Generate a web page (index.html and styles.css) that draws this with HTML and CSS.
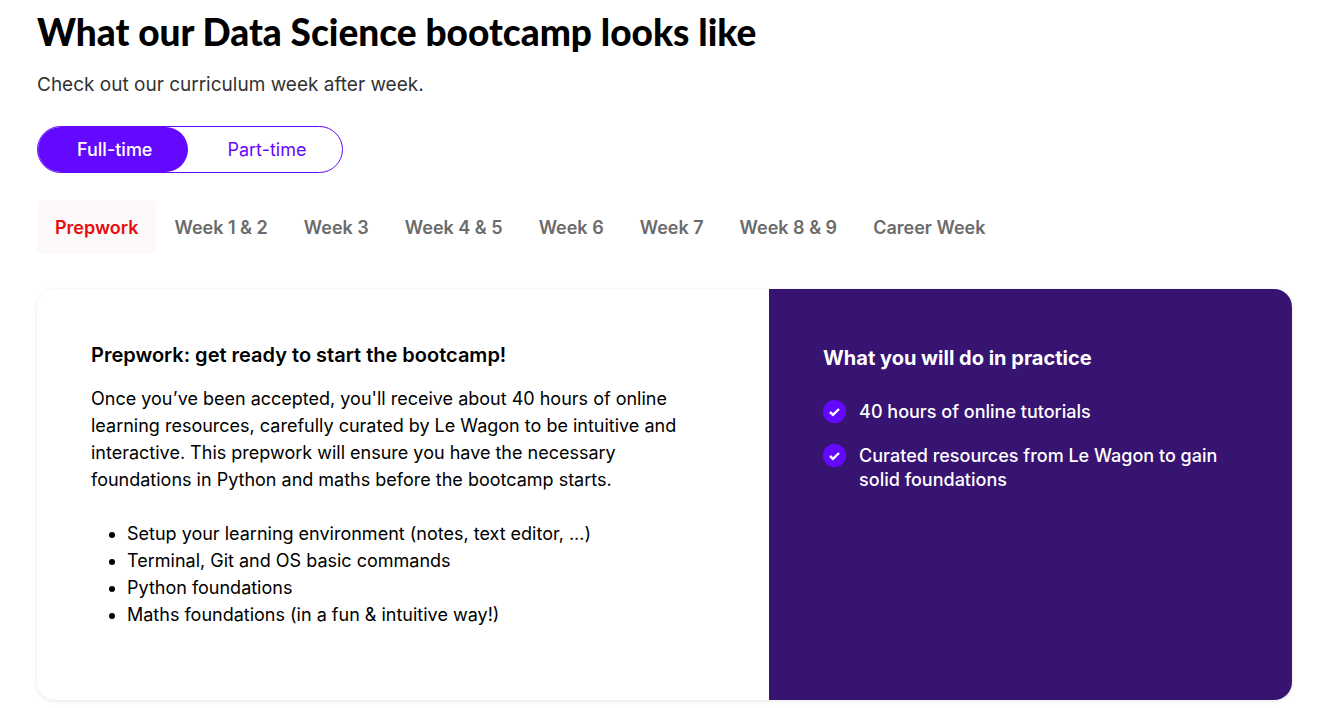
FILE: index.html
```html
<!DOCTYPE html>
<html lang="en">
<head>
<meta charset="utf-8">
<meta name="viewport" content="width=device-width, initial-scale=1">
<title>Data Science bootcamp curriculum</title>
<link rel="stylesheet" href="styles.css">
</head>
<body>
<main class="curriculum">
  <h1 class="title">What our Data Science bootcamp looks like</h1>
  <p class="subtitle">Check out our curriculum week after week.</p>
  <div class="toggle">
    <button type="button" class="toggle-option toggle-active">Full-time</button>
    <button type="button" class="toggle-option">Part-time</button>
  </div>
  <nav class="tabs">
    <button type="button" class="tab tab-active">Prepwork</button>
    <button type="button" class="tab">Week 1 &amp; 2</button>
    <button type="button" class="tab">Week 3</button>
    <button type="button" class="tab">Week 4 &amp; 5</button>
    <button type="button" class="tab">Week 6</button>
    <button type="button" class="tab">Week 7</button>
    <button type="button" class="tab">Week 8 &amp; 9</button>
    <button type="button" class="tab">Career Week</button>
  </nav>
  <article class="card">
    <section class="details">
      <h2 class="details-title">Prepwork: get ready to start the bootcamp!</h2>
      <p class="details-text">Once you’ve been accepted, you'll receive about 40 hours of online learning resources, carefully curated by Le Wagon to be intuitive and interactive. This prepwork will ensure you have the necessary foundations in Python and maths before the bootcamp starts.</p>
      <ul class="topics">
        <li>Setup your learning environment (notes, text editor, ...)</li>
        <li>Terminal, Git and OS basic commands</li>
        <li>Python foundations</li>
        <li>Maths foundations (in a fun &amp; intuitive way!)</li>
      </ul>
    </section>
    <section class="practice">
      <h2 class="practice-title">What you will do in practice</h2>
      <ul class="checks">
        <li class="check">
          <svg class="check-icon" viewBox="0 0 23 23" aria-hidden="true"><circle cx="11.5" cy="11.5" r="11.5" fill="#6409ff"/><path d="M7 12l3 2.8 6-5.8" fill="none" stroke="#fff" stroke-width="2.4"/></svg>
          <span>40 hours of online tutorials</span>
        </li>
        <li class="check">
          <svg class="check-icon" viewBox="0 0 23 23" aria-hidden="true"><circle cx="11.5" cy="11.5" r="11.5" fill="#6409ff"/><path d="M7 12l3 2.8 6-5.8" fill="none" stroke="#fff" stroke-width="2.4"/></svg>
          <span>Curated resources from Le Wagon to gain solid foundations</span>
        </li>
      </ul>
    </section>
  </article>
</main>
</body>
</html>
```
FILE: styles.css
```css
* {
  box-sizing: border-box;
}

body {
  margin: 0;
  background: #fff;
  color: #000;
  font-family: Inter, "Liberation Sans", sans-serif;
  font-size: 18px;
  line-height: 27px;
}

h1, h2, p, ul {
  margin: 0;
}

button {
  border: 0;
  background: none;
  font: inherit;
  cursor: pointer;
}

.curriculum {
  padding: 9px 38px 8px 37px;
}

.title {
  font-family: Lato, Inter, sans-serif;
  font-size: 37px;
  line-height: 46px;
  font-weight: 900;
}

.subtitle {
  margin-top: 16px;
  font-size: 19px;
  line-height: 28px;
  color: #333;
}

.toggle {
  display: inline-flex;
  margin-top: 27px;
  border: 1px solid #6409ff;
  border-radius: 24px;
}

.toggle-option {
  height: 45px;
  padding: 0 36px 0 39px;
  border-radius: 23px;
  color: #6409ff;
}

.toggle-active {
  background: #6409ff;
  color: #fff;
  font-weight: 500;
}

.tabs {
  display: flex;
  margin-top: 27px;
}

.tab {
  padding: 14px 18px 13px;
  border-radius: 5px;
  font-weight: 600;
  color: #6b6b6b;
  white-space: nowrap;
}

.tab-active {
  background: #fdf8f9;
  color: #e60d0d;
}

.card {
  display: grid;
  grid-template-columns: 7fr 5fr;
  min-height: 411px;
  margin-top: 35px;
  border-radius: 18px;
  overflow: hidden;
  box-shadow: 0 1px 4px rgba(0, 0, 0, 0.1);
}

.details {
  padding: 52px 54px;
}

.details-title {
  font-size: 20px;
  line-height: 28px;
  font-weight: 600;
}

.details-text {
  margin-top: 16px;
}

.topics {
  margin-top: 27px;
  padding-left: 36px;
}

.practice {
  padding: 54px;
  background: #371372;
  color: #fff;
}

.practice-title {
  font-size: 20px;
  line-height: 30px;
  font-weight: 700;
}

.checks {
  display: grid;
  gap: 20px;
  margin-top: 27px;
  padding: 0;
  list-style: none;
  line-height: 24px;
  font-weight: 500;
}

.check {
  display: flex;
  gap: 13px;
}

.check-icon {
  flex: none;
  width: 23px;
  height: 23px;
}
```
